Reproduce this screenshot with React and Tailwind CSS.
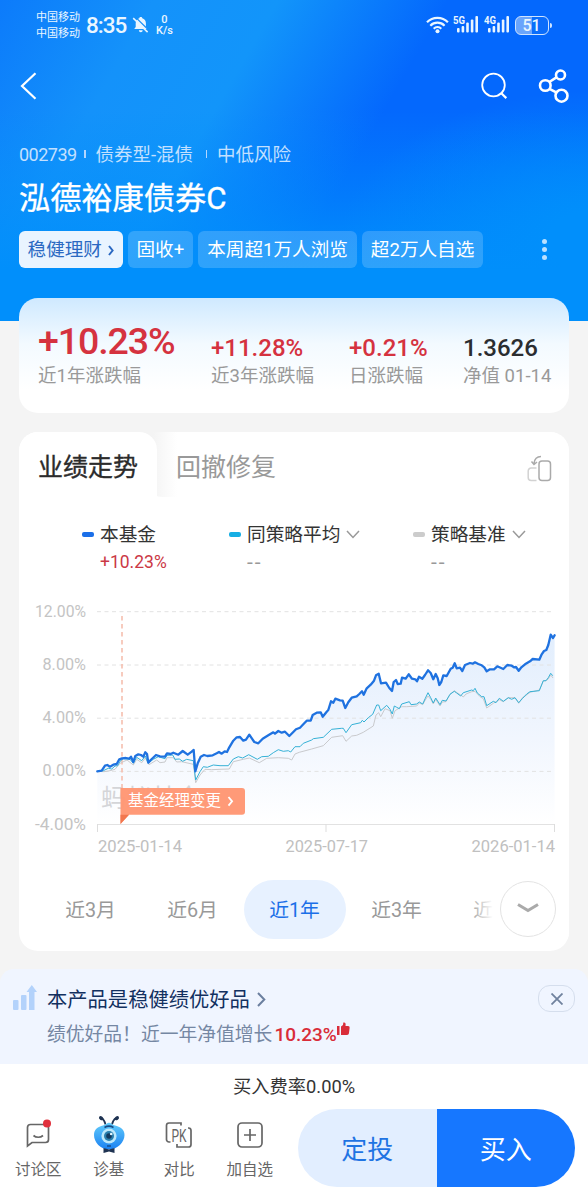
import { useState } from "react";
import clsx from "clsx";

const tags = ["固收+", "本周超1万人浏览", "超2万人自选"];

const stats = [
  { value: "+11.28%", label: "近3年涨跌幅", width: "w-[138px]", color: "text-[#d5323f]" },
  { value: "+0.21%", label: "日涨跌幅", width: "w-[114px]", color: "text-[#d5323f]" },
  { value: "1.3626", label: "净值 01-14", width: "w-[100px]", color: "text-[#2b2d30]" },
];

const periods = ["近3月", "近6月", "近1年", "近3年", "近5年"];

const gridLines = [
  { y: 611.7, label: "12.00%" },
  { y: 665, label: "8.00%" },
  { y: 718.2, label: "4.00%" },
  { y: 771.4, label: "0.00%" },
  { y: 824.5, label: "-4.00%" },
];

const fundLine =
  "97.3,771.3 101.7,770.7 105,765.7 107.3,765 110,766.7 113.3,764.7 116.7,764 119.3,759.3 122,758.3 126,758 129.3,758.7 131,756.7 133.3,762 135.3,756 138.3,754.3 141,755 143.3,756.7 145.3,752.3 147,754 148.3,762.7 150.7,760 156,755 160,756.3 165,756.7 167,753.3 170.7,754 173.3,752.7 178.3,754.7 182.7,751 187.7,754.7 191.7,751.7 193.7,750 195.3,771.3 197.7,763.3 200.7,756.7 204,755 207.3,756 212.7,755.3 216.7,753.3 219,752 221.7,753.7 224.7,751.3 227,752 229.3,747.3 233.3,740.7 236.7,737.3 240,737 243.3,740.7 246,739.7 249.3,734.7 252,738.7 254.3,742 258.3,743.3 262.7,738.7 268.3,735.3 273.3,732.3 275,733.7 278.3,731 281.7,732.7 285,731.7 289.3,736 293.3,732 296,729.3 300,727.7 303.3,724.3 306.7,720.7 310.7,720.7 312.7,715 316.7,712.7 320.7,712.3 322.7,716.7 326.7,711.7 328.3,710 331,701.3 333.3,702.7 335.3,698.7 340,700.3 342.7,700.7 345.3,708 348.3,702.3 351.7,697.7 356.7,696.3 359.3,694 362,691.3 363.7,694.7 366.7,688.3 370.7,684.7 374,680.7 376,675.3 378.7,673.7 381,683.3 386,682.7 389.3,688 392,691 393.7,682 396,680 397.7,684 400.7,683.7 402,677.7 405.7,678.7 408.7,674.3 412,678.7 415.3,679.3 417,681.3 419,676.7 422.3,678.7 425,675 428,670.3 430.7,673 433.3,679.3 435.7,674 437.7,678.3 439.3,685 441.3,682 443.3,675.3 446.7,676 450.7,668.7 452.7,667.7 454.7,663.3 456.7,668.3 460,667.7 462.3,671 465,665 470,663 472.7,663.7 475,662.3 478.3,664 481.7,665.3 484.3,667.3 486.7,671.3 490,669.3 494,669.3 497.3,666.3 503.3,669 507.3,665 511.7,665.7 514,667.3 516,667 518.7,670.7 521,667.7 525,664.3 530,661.3 532.7,659 539.3,659.7 541.7,654.3 544,651 546.3,650 548.3,645 550.7,634.7 553,638 554.6,635.3";

const peerLine =
  "97.3,771.3 103.3,770.7 108.3,768.3 111.7,769 115,766 117.7,765.7 120,761.3 123.3,758.7 130,759.3 133.3,763.3 136.7,757.3 141.7,760.7 145.3,756 148,763.3 153.3,759.3 158.3,756.7 165,758.7 167,755.3 172.7,755 175,759.3 179.3,759 182.7,761.3 186.7,759.3 193.3,760.7 195.7,780 200,771.7 203.3,766.7 207.3,767.3 213.3,765 220,765.7 228.3,765.7 233.3,759 238.3,756.7 242.7,758 248.7,754.7 257.3,759.3 261.7,756.7 268.3,756.3 273.3,752.7 278.3,749.7 283.3,751.3 288.3,750.7 290.7,752 295,746.7 300,746.7 303.3,743.3 311.7,740 313.3,738.7 323.3,737.3 331.7,729.3 341.7,728.3 343.3,728.3 346,732.7 351.7,724.7 360.7,722.7 362.3,720.3 364,722 368.3,717.7 372.7,714.3 376.7,705 378.7,705 380.7,710.7 386.7,705.3 390,709.3 392.3,714 394.3,706 396.7,707.3 399.3,708.7 401.7,704 409.3,701.7 411,704.7 416.7,704 419.3,702 422.7,704 425.3,698.3 428,692.7 430.7,697.7 433.3,703 435.7,698 440,704.7 442.3,700.3 446,701 450,694.3 454.3,691.3 456.7,693 460.7,696 463.3,692.7 471.7,690 473.3,690.7 475,688.3 477.3,693 481.7,696.7 484,696.7 486.7,705.7 493.3,701.3 496,702.7 499.3,698.3 503.3,701.3 508.3,697.7 511.7,699.3 515,697.7 518.7,702.7 522.3,698.7 526.7,694 530,691.7 539.3,690.7 543.3,680.7 546,680.7 548.3,677.7 550.7,673.3 552.7,675.7";

const benchLine =
  "97.3,771.3 104,771.7 110,770.7 115,769.3 120,763.3 127,760 133.3,765 136.7,759.3 141.7,762.7 145.3,758 149,764.7 156.7,760 160,762.7 165,762 167,757.7 173.3,757.7 176.7,762 181.7,761.7 193.3,764.3 195.7,782.7 200,775 205,769.3 211.7,769.7 220,769.3 229.3,769 233.3,761.7 243.3,759.3 249.3,758 259.3,762.7 266.7,758.3 278.3,757.7 288.3,758.3 291.7,760 295,754 299.3,752.3 311.7,749 323.3,745.7 331.7,737.3 342.7,735.7 346,741.3 351.7,736 356.7,735.3 363.3,732.3 373.3,726 376,715 378.7,712.7 380.7,716.7 385,708.7 390,710.7 392.3,718.3 395,710.7 401.7,706.7 406.7,706.7 416.7,706 419.3,703 422.7,704.7 425.3,700 428,696 430.7,699.3 433.3,704 435.7,699.3 440,706 442.3,702 446,701.7 450,694.3 454.3,690.7 457,692.7 460.7,695 463.3,697 466,694 471.7,691.7 475,691.3 480,696.7 483.3,698.7 486.7,708 493.3,703.3 499.3,699.7 503.3,701.7 508.3,697.7 515,697.7 518.7,703.3 522.3,697.7 526.7,695 530,692.3 539.3,690 543.3,681 546,680.7 548.3,679 550.7,675 553,678";

const SignalBars = ({ label }) => (
  <svg width="27" height="20" viewBox="0 0 27 20">
    <text x="0" y="8.5" fontSize="10" fontWeight="700" fill="#eaf6ff" textLength="12" lengthAdjust="spacingAndGlyphs">
      {label}
    </text>
    <g fill="#eaf6ff">
      <rect x="4" y="13" width="2.6" height="4.5" rx="1" />
      <rect x="8.6" y="11" width="2.6" height="6.5" rx="1" />
      <rect x="13.2" y="7.5" width="2.6" height="10" rx="1" />
      <rect x="17.8" y="4.5" width="2.6" height="13" rx="1" />
      <rect x="22.4" y="1" width="2.6" height="16.5" rx="1" />
    </g>
  </svg>
);

const StatusBar = () => (
  <div className="flex h-[50px] items-center pl-9 pr-[36px] text-[#eaf6ff]">
    <div className="w-[50px] pt-[2px] text-[11px] leading-[16.5px]">
      <div>中国移动</div>
      <div>中国移动</div>
    </div>
    <div className="w-[46px] text-[22.5px] font-medium leading-none tracking-[-1px]">8:35</div>
    <svg width="18" height="18" viewBox="0 0 18 18" className="mt-[-1px]">
      <path
        fill="#eaf6ff"
        d="M8.8 1c.9 0 1.4.5 1.5 1.2 2.2.7 3.6 2.6 3.6 5v3.7l1.5 2H2.2l1.5-2V7.2c0-2.4 1.5-4.3 3.6-5C7.4 1.5 8 1 8.8 1zM6.9 14.2h3.8c0 1.2-.8 2-1.9 2s-1.9-.8-1.9-2z"
      />
      <path d="M3.2.9l14.6 14.3" stroke="#158ffa" strokeWidth="1.2" />
      <path d="M1.2 2.1l14.4 14" stroke="#eaf6ff" strokeWidth="1.5" />
    </svg>
    <div className="ml-[6px] flex flex-col items-center text-[11px] font-medium leading-[11px]">
      <span>0</span>
      <span>K/s</span>
    </div>
    <div className="ml-auto flex items-center">
      <svg width="23" height="18" viewBox="0 0 23 18" fill="none" stroke="#eaf6ff" strokeWidth="2.2">
        <path d="M1 6.3c5.700-6 15.200-6 20.900 0" />
        <path d="M4.300 9.700c4-4 10.300-4 14.300 0" />
        <path d="M7.700 12.700c2.200-2.100 5.400-2.100 7.600 0" />
        <circle cx="11.5" cy="15.3" r="2" fill="#eaf6ff" stroke="none" />
      </svg>
      <div className="ml-[4px]">
        <SignalBars label="5G" />
      </div>
      <div className="ml-1">
        <SignalBars label="4G" />
      </div>
      <div className="ml-[4px] flex h-[19px] w-[34px] items-center justify-center rounded-[6px] border-[1.5px] border-[#cfe4ff] bg-linear-to-r from-[#6aa5fc] from-50% to-[#0a6dfb] to-50% pt-[2px] text-[16px] font-medium leading-none">
        51
      </div>
      <div className="ml-px h-[5px] w-[2.5px] rounded-r bg-[#cfe4ff]" />
    </div>
  </div>
);

const Header = () => (
  <header className="h-[321px] bg-[radial-gradient(ellipse_260px_150px_at_600px_240px,#018ffb_20%,#018ffb00_100%),linear-gradient(180deg,#018ffb00_34%,#018ffb80_62%,#018ffb_84%),linear-gradient(120deg,#0c7bfb_0%,#1492fa_20%,#1295fa_36%,#0468fd_58%,#0468fd_100%)]">
    <StatusBar />

    <div className="flex h-[72px] items-center pl-5 pr-[19px]">
      <svg width="17" height="28" viewBox="0 0 17 28" fill="none" stroke="#fff" strokeWidth="2.2">
        <path d="M15.5 1.200L2 14l13.500 12.800" />
      </svg>
      <svg className="ml-auto" width="27" height="28" viewBox="0 0 27 28" fill="none" stroke="#fff" strokeWidth="1.8">
        <circle cx="12.5" cy="13" r="11.3" />
        <path d="M19.8 20.800l5.500 5.300" strokeWidth="2.2" />
      </svg>
      <svg className="ml-[30px]" width="31" height="34" viewBox="0 0 31 34" fill="none" stroke="#fff" strokeWidth="2.6">
        <circle cx="7.3" cy="16.5" r="5.3" />
        <circle cx="22.5" cy="6" r="4.5" />
        <circle cx="23.5" cy="26.7" r="6" />
        <path d="M11.3 13l7.500-4.800M11.500 19.800l7.200 3.800" />
      </svg>
    </div>

    <div className="mt-4 flex h-8 items-center pl-[19px] text-[18.5px] text-[#c3e0ff]">
      <span className="w-[65px] text-[18px] tracking-[-0.5px]">002739</span>
      <span className="h-2 w-[1.5px] bg-[#b3d6ff]" />
      <span className="ml-[10px] w-[110px] whitespace-nowrap pt-[3px]">债券型-混债</span>
      <span className="h-2 w-[1.5px] bg-[#b3d6ff]" />
      <span className="ml-[10px] pt-[3px]">中低风险</span>
    </div>
    <h1 className="flex h-[54px] items-center pl-[19px] pt-[4px] text-[31.2px] text-white [-webkit-text-stroke:0.35px_#fff]">
      泓德裕康债券C
    </h1>

    <div className="mt-[7px] flex items-center gap-[5px] pl-[19px] text-[18.6px] text-white">
      <span className="flex h-[37px] w-[103.5px] items-center justify-center rounded-[6px] bg-[#e9f4ff] pt-[2px] text-[#2b69c2]">
        稳健理财
        <svg className="ml-[6px]" width="6" height="11" viewBox="0 0 6 11" fill="none" stroke="#2b69c2" strokeWidth="2">
          <path d="M1 1l3.600 4.500L1 10" />
        </svg>
      </span>
      {tags.map((tag) => (
        <span
          key={tag}
          className="flex h-[37px] items-center whitespace-nowrap rounded-[6px] bg-white/18 px-[9px] pt-[2px]"
        >
          {tag}
        </span>
      ))}
      <span className="ml-auto mr-[41.5px] flex flex-col gap-[3px]">
        <i className="size-[5px] rounded-full bg-[#b9e0ff]" />
        <i className="size-[5px] rounded-full bg-[#b9e0ff]" />
        <i className="size-[5px] rounded-full bg-[#b9e0ff]" />
      </span>
    </div>
  </header>
);

const StatsCard = () => (
  <section className="mx-[19px] mt-[-23px] flex h-[115px] rounded-[19px] bg-linear-to-b from-[#cfe9ff] via-[#f3faff] via-40% to-white to-80% pl-[19px]">
    <div className="w-[173px]">
      <div className="mt-[20px] text-[37.5px] font-medium leading-[46px] tracking-[-1.1px] text-[#d5323f]">+10.23%</div>
      <div className="pt-[1px] text-[18.5px] leading-[22px] text-[#999]">近1年涨跌幅</div>
    </div>
    {stats.map((s) => (
      <div key={s.label} className={s.width}>
        <div className={clsx("mt-[35px] text-[24px] font-medium leading-[31px]", s.color)}>{s.value}</div>
        <div className="whitespace-nowrap pt-[1px] text-[18.5px] leading-[22px] text-[#999]">{s.label}</div>
      </div>
    ))}
  </section>
);

const Arrow = () => (
  <svg width="14" height="9" viewBox="0 0 14 9" fill="none" stroke="#999" strokeWidth="1.5">
    <path d="M1 1l6 6.500L13 1" />
  </svg>
);

const LegendItem = ({ name, swatch, arrow, children }) => (
  <>
    <div className="flex items-center">
      <i className={clsx("mr-[6px] h-[5px] w-[12px] rounded-[2px]", swatch)} />
      <span className="mr-[6px] pt-[2px]">{name}</span>
      {arrow && <Arrow />}
    </div>
    {children}
  </>
);

const Legend = () => (
  <div className="flex pt-[20px] text-[18.7px] leading-[28px] text-[#333]">
    <div className="ml-[63px] w-[147px]">
      <LegendItem name="本基金" swatch="bg-[#1b6fe8]">
        <div className="pl-[18px] text-[17.5px] leading-[26px] text-[#cb3845]">+10.23%</div>
      </LegendItem>
    </div>
    <div className="w-[184px]">
      <LegendItem name="同策略平均" swatch="bg-[#17aee4]" arrow>
        <div className="pl-[18px] text-[21px] leading-[26px] tracking-[2px] text-[#999]">--</div>
      </LegendItem>
    </div>
    <div>
      <LegendItem name="策略基准" swatch="bg-[#ccc]" arrow>
        <div className="pl-[18px] text-[21px] leading-[26px] tracking-[2px] text-[#999]">--</div>
      </LegendItem>
    </div>
  </div>
);

const Chart = () => (
  <svg className="block" width="550" height="260" viewBox="19 600 550 260">
    <defs>
      <linearGradient id="area" x1="0" y1="635" x2="0" y2="824" gradientUnits="userSpaceOnUse">
        <stop offset="0" stopColor="#e2eefd" />
        <stop offset="0.55" stopColor="#f1f6fe" />
        <stop offset="1" stopColor="#ffffff" />
      </linearGradient>
    </defs>

    <polygon fill="url(#area)" points={`97.3,824 ${fundLine} 554.6,824`} />
    <text x="101" y="807" fontSize="25" fill="#d4d5d8">
      蚂蚁基金
    </text>

    {gridLines.map((g, i) => (
      <g key={g.label}>
        <text
          x="86"
          y={g.y + 5}
          textAnchor="end"
          fontSize="16.5"
          fill="#c4c4c4"
          textLength={i === 0 || i === 4 ? 51 : 43.5}
          lengthAdjust="spacingAndGlyphs"
        >
          {g.label}
        </text>
        <path
          d={`M97 ${g.y}H554.5`}
          stroke="#e2e2e2"
          strokeDasharray={i === gridLines.length - 1 ? "none" : "4 3.5"}
        />
      </g>
    ))}
    <path d="M97.5 824v8M326 824v8M554.5 824v8" stroke="#ddd" />

    <path d="M122 616V790" stroke="#f5bfae" strokeWidth="1.6" strokeDasharray="4.5 3.5" />
    <polyline points={benchLine} fill="none" stroke="#c9cacd" strokeWidth="1" />
    <polyline points={peerLine} fill="none" stroke="#35b1d6" strokeWidth="1" />
    <polyline points={fundLine} fill="none" stroke="#1f72e0" strokeWidth="2.3" strokeLinejoin="round" strokeLinecap="round" />

    {/* manager change flag */}
    <path
      d="M120.5 788h121.500a3 3 0 0 1 3 3v20.700a3 3 0 0 1-3 3H129l-8.500 9.300z"
      fill="#ff9672"
      fillOpacity="0.96"
    />
    <path d="M120.5 814.700h8.500l-8.500 9.300z" fill="#f2774f" />
    <text x="128" y="806" fontSize="15.5" fill="#fff">
      基金经理变更
    </text>
    <path d="M228.5 797l3.600 4.300-3.600 4.300" fill="none" stroke="#fff" strokeWidth="1.8" />

    <g fontSize="16.5" fill="#c0c0c0">
      <text x="98" y="851.5" textLength="84" lengthAdjust="spacingAndGlyphs">2025-01-14</text>
      <text x="285.5" y="851.5" textLength="82.5" lengthAdjust="spacingAndGlyphs">2025-07-17</text>
      <text x="471.5" y="851.5" textLength="83.5" lengthAdjust="spacingAndGlyphs">2026-01-14</text>
    </g>
  </svg>
);

const Periods = () => {
  const [active, setActive] = useState("近1年");

  return (
    <div className="relative mt-5 flex h-[59px] overflow-hidden pl-[20.5px] pr-[12px]">
      {periods.map((p) => (
        <button
          key={p}
          onClick={() => setActive(p)}
          className={clsx(
            "h-[59px] w-[102px] shrink-0 rounded-full pt-[2px] text-[19.8px]",
            active === p ? "bg-[#e7f1ff] text-[#1b6fe8]" : "text-[#999]"
          )}
        >
          {p}
        </button>
      ))}
      <div className="absolute right-0 top-0 flex h-full w-[101px] items-center bg-linear-to-r from-white/0 to-white to-25% pb-[2px] pl-[32px]">
        <button className="flex size-[56px] items-center justify-center rounded-full border-[1.5px] border-[#e3e3e3] bg-white">
          <svg width="22" height="11" viewBox="0 0 22 11" fill="none" stroke="#aaa" strokeWidth="3">
            <path d="M1 1.500l10 6 10-6" />
          </svg>
        </button>
      </div>
    </div>
  );
};

const PerformanceCard = () => (
  <section className="mx-[19px] mt-[19px] h-[519px] overflow-hidden rounded-[19px] bg-white">
    <div className="flex h-[67px] text-[25px]">
      <div className="relative flex h-full w-[138px] items-center rounded-tr-[18px] bg-white pl-[19px] pt-[5px] text-[#2b2b2b] [-webkit-text-stroke:0.35px_#2b2b2b]">
        业绩走势
      </div>
      <div className="-ml-[18px] flex h-[65px] flex-1 items-center rounded-bl-[24px] bg-linear-to-r from-[#f4f4f4] from-[14px] to-white to-[38px] pl-[37px] pt-[7px] text-[#999]">
        回撤修复
        <svg className="ml-auto mr-[17px]" width="25" height="27" viewBox="0 0 25 27" fill="none" stroke="#aaa" strokeWidth="1.5">
          <rect x="12" y="6" width="11.5" height="19.5" rx="3" />
          <path d="M9.5 13H4.200a3 3 0 0 0-3 3v6.500a3 3 0 0 0 3 3h5.300" stroke="#d2d2d2" />
          <path d="M14 1.500c-4 0-6.500 2.500-7 7M4.500 6.500L7 9.500l3-2.500" />
        </svg>
      </div>
    </div>
    <Legend />
    <div className="mt-[25px]">
      <Chart />
    </div>
    <Periods />
  </section>
);

const Banner = () => (
  <section className="mt-[18px] flex h-[95px] rounded-t-[14px] bg-[#f0f5ff] pl-[13px] pr-[13px]">
    <svg className="mt-[15px]" width="24" height="27" viewBox="0 0 24 27" fill="#b3d2fb">
      <rect x="0" y="16" width="5.5" height="10" rx="1" />
      <rect x="8" y="11" width="5.5" height="15" rx="1" />
      <path d="M16 26V8h-2.500l5.300-7 5.200 7h-2.500v18z" />
    </svg>
    <div className="ml-[10px] pt-[15px]">
      <div className="flex items-center text-[20.3px] leading-[30px] text-[#12305f]">
        <span className="pt-[1px]">本产品是稳健绩优好品</span>
        <svg className="ml-[7px]" width="9" height="15" viewBox="0 0 9 15" fill="none" stroke="#6b7f9f" strokeWidth="2">
          <path d="M1 1l6.300 6.500L1 14" />
        </svg>
      </div>
      <div className="mt-[4px] flex text-[18.8px] leading-[32px] text-[#7587a3]">
        绩优好品！近一年净值增长
        <span className="ml-[2px] text-[19px] font-medium text-[#d92c39]">10.23%</span>
        <svg className="mt-[3px]" width="13" height="14" viewBox="0 0 13 14" fill="#d92c39">
          <rect x="0" y="4" width="2.5" height="9" />
          <path d="M4 4.500L6 3l.3-2.500C8.500 0 9 1.500 8.500 4H11c1.300 0 1.800.8 1.600 2L12 11c-.2 1.300-.8 2-2 2H4z" />
        </svg>
      </div>
    </div>
    <button className="ml-auto mt-[16px] flex h-[27px] w-[37px] items-center justify-center rounded-[12px] border-[1.5px] border-[#d5deed]">
      <svg width="12" height="12" viewBox="0 0 12 12" stroke="#70829e" strokeWidth="1.8">
        <path d="M.5.5l11 11M11.500.5l-11 11" />
      </svg>
    </button>
  </section>
);

const ChatIcon = () => (
  <svg width="36" height="40" viewBox="0 0 36 40" fill="none" stroke="#666" strokeWidth="1.7">
    <path d="M7.5 31V12.500a3 3 0 0 1 3-3h15a3 3 0 0 1 3 3v12a3 3 0 0 1-3 3H12z" />
    <path d="M13.5 20.500c2.500 2.300 7 2.300 9.500 0" />
    <circle cx="27" cy="8.5" r="4" fill="#e0303c" stroke="none" />
  </svg>
);

const RobotIcon = () => (
  <svg width="36" height="40" viewBox="0 0 36 40">
    <defs>
      <linearGradient id="bot" x1="0" y1="0" x2="0" y2="1">
        <stop offset="0" stopColor="#63cdfb" />
        <stop offset="1" stopColor="#1b81f2" />
      </linearGradient>
    </defs>
    <path d="M14.5 9.500c-.5-3-1.500-4.800-4-6.500M21 9.500c.5-3 1.500-4.800 4-6.500" stroke="#1f3352" strokeWidth="1.6" fill="none" />
    <ellipse cx="10.2" cy="3.2" rx="2.4" ry="1.8" fill="#1f3352" transform="rotate(35 10.2 3.2)" />
    <ellipse cx="25.8" cy="3.2" rx="2.4" ry="1.8" fill="#1f3352" transform="rotate(-35 25.8 3.2)" />
    <path d="M3 20c0-5.500 4-8.500 9-9.500 3-.6 4-2.800 6-2.800s3 2.200 6 2.800c5 1 9.500 4 9.500 9.500 0 7-7 14.500-15.500 14.500S3 27 3 20z" fill="url(#bot)" />
    <path d="M13.5 12.500c2.500-1.500 6.500-1.500 9 0" stroke="#174a86" strokeWidth="1.6" fill="none" />
    <circle cx="18" cy="21" r="7.6" fill="#bde8fb" />
    <circle cx="18" cy="21" r="5" fill="#297fae" />
    <circle cx="18" cy="21" r="2.8" fill="#12395e" />
    <circle cx="20.2" cy="19" r="1.3" fill="#e5f8ff" />
    <path d="M16 31h4" stroke="#174a86" strokeWidth="1.4" />
    <path d="M12.5 33l5.500 1.500 5.500-1.500v5L18 36.500 12.500 38z" fill="#1f3352" />
  </svg>
);

const PkIcon = () => (
  <svg width="36" height="40" viewBox="0 0 36 40" fill="none" stroke="#666" strokeWidth="1.7">
    <path d="M9.5 27H8a2.500 2.500 0 0 1-2.500-2.500v-14A2.500 2.500 0 0 1 8 8h12v2.500" />
    <path d="M27 13h.5a2.500 2.500 0 0 1 2.500 2.500v14a2.500 2.500 0 0 1-2.500 2.500H16v-3" />
    <text x="10.5" y="26.5" fontSize="18.5" fill="#666" stroke="none" textLength="15" lengthAdjust="spacingAndGlyphs">
      PK
    </text>
  </svg>
);

const AddIcon = () => (
  <svg width="36" height="40" viewBox="0 0 36 40" fill="none" stroke="#666" strokeWidth="1.7">
    <rect x="6" y="8" width="24" height="24" rx="4" />
    <path d="M18 14v12M12 20h12" />
  </svg>
);

const actions = [
  { name: "讨论区", icon: <ChatIcon /> },
  { name: "诊基", icon: <RobotIcon /> },
  { name: "对比", icon: <PkIcon /> },
  { name: "加自选", icon: <AddIcon /> },
];

const BottomBar = () => (
  <footer className="flex-1 bg-white">
    <div className="pt-[8px] text-center text-[18.3px] leading-[29px] text-[#333]">买入费率0.00%</div>
    <div className="mt-[8px] flex pl-[3px]">
      {actions.map((a) => (
        <div key={a.name} className="mt-[6px] flex w-[70.5px] flex-col items-center text-[15.5px] text-[#666]">
          {a.icon}
          <span className="mt-[3px] leading-6">{a.name}</span>
        </div>
      ))}
      <div className="ml-[13px] flex h-[78px] w-[277px] overflow-hidden rounded-full text-[26px]">
        <button className="flex-1 bg-[#e2eeff] pt-[4px] text-[#1f74e3]">定投</button>
        <button className="flex-1 bg-[#1677ff] pt-[4px] text-white">买入</button>
      </div>
    </div>
  </footer>
);

const App = () => {
  return (
    <div className="flex h-[1200px] w-[588px] flex-col overflow-hidden bg-[#f4f4f4] font-[Roboto,'Noto_Sans_CJK_SC',sans-serif]">
      <Header />
      <StatsCard />
      <PerformanceCard />
      <Banner />
      <BottomBar />
    </div>
  );
};

export default App;
